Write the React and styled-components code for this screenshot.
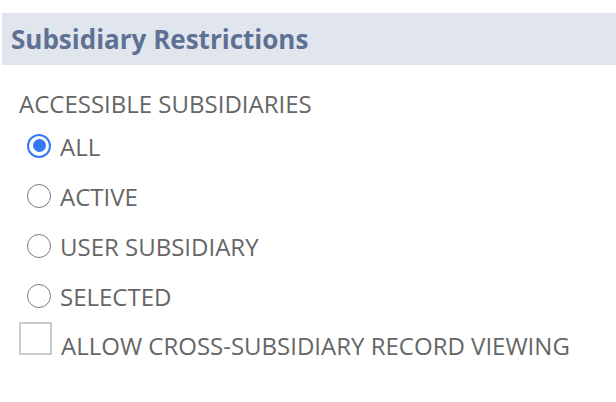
import React, { useState } from "react";
import styled, { createGlobalStyle } from "styled-components";

const GlobalStyle = createGlobalStyle`
  html, body {
    margin: 0;
    padding: 0;
    background: #ffffff;
    font-family: "Open Sans", "Noto Sans", sans-serif;
  }
`;

const Panel = styled.div`
  width: 616px;
  height: 402px;
  padding-top: 13px;
  box-sizing: border-box;
`;

const Header = styled.div`
  margin-left: 2px;
  height: 52px;
  background: #e0e5ee;
  display: flex;
  align-items: center;
  padding-left: 9px;
`;

const Title = styled.h2`
  margin: 0;
  font-size: 26px;
  font-weight: 700;
  color: #5e7192;
`;

const Body = styled.div`
  padding: 24px 0 0 19px;
`;

const FieldLabel = styled.div`
  font-size: 24px;
  color: #666666;
  line-height: 30px;
  margin-bottom: 3px;
`;

const RadioList = styled.div`
  display: flex;
  flex-direction: column;
`;

const RadioRow = styled.label`
  display: flex;
  align-items: center;
  height: 50px;
  padding-left: 8px;
  cursor: pointer;
`;

const RadioDot = styled.span`
  width: 24px;
  height: 24px;
  box-sizing: border-box;
  border-radius: 50%;
  border: ${(p) => (p.checked ? "2.5px solid #3478f6" : "1.5px solid #7a7a7a")};
  display: flex;
  align-items: center;
  justify-content: center;
  margin-right: 9px;
  margin-top: -3px;
  flex-shrink: 0;

  &::after {
    content: "";
    width: 13px;
    height: 13px;
    border-radius: 50%;
    background: ${(p) => (p.checked ? "#3478f6" : "transparent")};
  }
`;

const OptionText = styled.span`
  font-size: 24px;
  color: #666666;
  line-height: 30px;
`;

const CheckRow = styled.label`
  display: flex;
  align-items: flex-end;
  margin-top: 0px;
  cursor: pointer;
`;

const CheckBox = styled.span`
  width: 33px;
  height: 33px;
  box-sizing: border-box;
  border: 2px solid #cccccc;
  background: #ffffff;
  margin-right: 9px;
  flex-shrink: 0;
`;

const CheckText = styled.span`
  font-size: 24px;
  color: #666666;
  line-height: 26px;
  margin-bottom: -4px;
`;

const options = ["ALL", "ACTIVE", "USER SUBSIDIARY", "SELECTED"];

export default function App() {
  const [selected, setSelected] = useState("ALL");
  const [allowCross, setAllowCross] = useState(false);

  return (
    <Panel>
      <GlobalStyle />
      <Header>
        <Title>Subsidiary Restrictions</Title>
      </Header>
      <Body>
        <FieldLabel>ACCESSIBLE SUBSIDIARIES</FieldLabel>
        <RadioList>
          {options.map((o) => (
            <RadioRow key={o} onClick={() => setSelected(o)}>
              <RadioDot checked={selected === o} />
              <OptionText>{o}</OptionText>
            </RadioRow>
          ))}
        </RadioList>
        <CheckRow onClick={() => setAllowCross(!allowCross)}>
          <CheckBox />
          <CheckText>ALLOW CROSS-SUBSIDIARY RECORD VIEWING</CheckText>
        </CheckRow>
      </Body>
    </Panel>
  );
}
